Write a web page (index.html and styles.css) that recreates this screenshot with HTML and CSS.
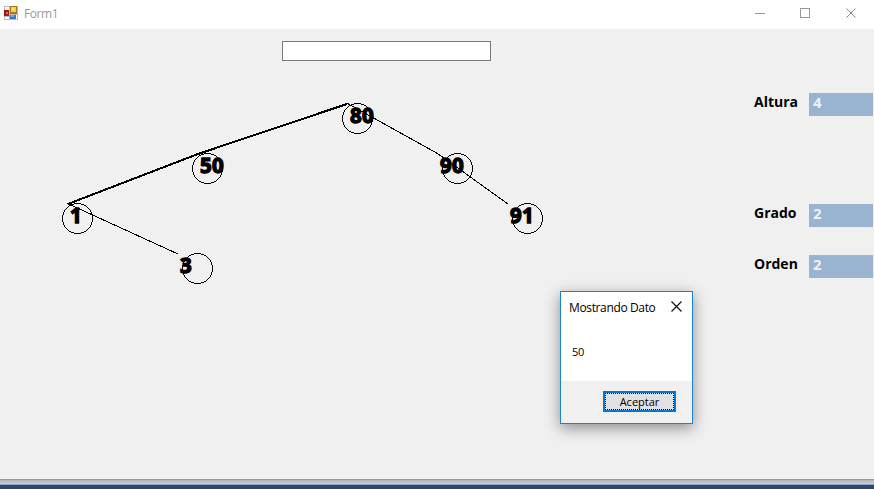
FILE: index.html
```html
<!DOCTYPE html>
<html lang="es">
<head>
<meta charset="utf-8">
<title>Form1</title>
<link rel="stylesheet" href="styles.css">
</head>
<body>
<div class="window">
  <header class="titlebar">
    <svg class="app-icon" width="14" height="14" shape-rendering="crispEdges">
      <rect width="14" height="14" fill="#b9b9b9"/>
      <path fill="#fff" d="M1 1h4v3H1zM1 11h4v2H1zM12 9h1v4h-1z"/>
      <rect y="4" width="5" height="6" fill="#a31a12"/><rect x="2" y="6" width="2" height="2" fill="#e8695c"/>
      <rect x="6" width="7" height="8" fill="#a77b12"/><rect x="7" y="1" width="5" height="5" fill="#f8ce47"/><rect x="8" y="2" width="2" height="2" fill="#ffe391"/>
      <rect x="6" y="9" width="6" height="4" fill="#3a72cc"/><rect x="7" y="9" width="3" height="2" fill="#78a7ec"/>
    </svg>
    <span class="caption">Form1</span>
    <svg class="controls" width="102" height="11" fill="none" stroke="#999">
      <path shape-rendering="crispEdges" d="M0 5.500h10M45.500 .5h9v9h-9z"/>
      <path d="M91.500 .5l9 9M100.500 .5l-9 9" stroke="#888"/>
    </svg>
  </header>
  <main class="client">
    <section class="workspace">
      <input class="entry" type="text" aria-label="Dato">
      <svg class="tree" width="740" height="418" viewBox="0 61 740 418">
        <g class="edges" shape-rendering="crispEdges">
          <path class="heavy" d="M68 204L198 154L347 104"/>
          <path d="M347.500 103.500L437.500 153.500L508 204M67.500 203.500L178 254"/>
        </g>
        <g class="nodes" shape-rendering="crispEdges">
          <circle cx="357.500" cy="118.500" r="15"/><circle cx="207.500" cy="168.500" r="15"/>
          <circle cx="77.500" cy="218.500" r="15"/><circle cx="197.500" cy="268.500" r="15"/>
          <circle cx="457.500" cy="168.500" r="15"/><circle cx="527.500" cy="218.500" r="15"/>
        </g>
        <g class="keys">
          <text x="350" y="123">80</text><text x="200" y="173">50</text>
          <text x="70" y="223">1</text><text x="180" y="273">3</text>
          <text x="440" y="173">90</text><text x="510" y="223">91</text>
        </g>
      </svg>
    </section>
    <aside class="stats">
      <span class="label">Altura</span><span class="value">4</span>
      <span class="label">Grado</span><span class="value">2</span>
      <span class="label">Orden</span><span class="value">2</span>
    </aside>
  </main>
  <footer class="edge"></footer>
</div>
<div class="dialog" role="dialog">
  <div class="dialog-head"><span>Mostrando Dato</span>
    <svg width="11" height="11" stroke="#111" stroke-width="1.200"><path d="M.5 .5l10 10M10.500 .5l-10 10"/></svg>
  </div>
  <div class="message">50</div>
  <div class="actions"><button class="accept"><span>Aceptar</span></button></div>
</div>
</body>
</html>
```

FILE: styles.css
```css
* { box-sizing: border-box; }
body { margin: 0; width: 874px; height: 489px; overflow: hidden; font-family: "Open Sans", "Noto Sans", sans-serif; }
.window { display: flex; flex-direction: column; height: 489px; background: #f0f0f0; }
.titlebar { display: flex; align-items: center; height: 29px; padding: 0 17px 3px 4px; background: #fff; }
.app-icon { margin-right: 6px; }
.caption { color: #999; font-size: 12px; letter-spacing: -.4px; line-height: 16px; padding-top: 2px; }
.controls { margin-left: auto; }
.client { display: flex; height: 450px; }
.workspace { display: flex; flex-direction: column; width: 740px; padding-top: 12px; }
.entry { width: 209px; height: 20px; margin-left: 282px; border: 1px solid #7a7a7a; background: #fff; outline: 0; }
.tree { display: block; }
.edges path { fill: none; stroke: #000; stroke-width: 1; }
.edges .heavy { stroke-width: 2; }
.nodes circle { fill: none; stroke: #000; }
.keys { font-size: 20.5px; font-weight: 700; letter-spacing: .3px; fill: #000; stroke: #000; stroke-width: 1.3px; }
.stats { display: grid; grid-template-columns: 55px 64px; grid-template-rows: 111px 51px 23px; align-content: start; padding: 64px 0 0 14px; width: 134px; font-size: 14px; font-weight: 700; line-height: 18px; }
.label { color: #000; }
.value { height: 23px; padding-left: 4px; background: #99b4d1; color: #f0f0f0; font-size: 15px; }
.edge { height: 10px; background: linear-gradient(#999 1px, #b4b4b8 1px, #ceced2 5px, #8ca3c5 5px, #8ca3c5 6px, #2f4768 6px); }
.dialog { position: absolute; left: 560px; top: 291px; display: flex; flex-direction: column; width: 133px; height: 133px; border: 1px solid #1e82d2; background: #fff; box-shadow: 0 4px 14px rgba(0,0,0,.42); color: #000; }
.dialog-head { display: flex; justify-content: space-between; align-items: center; height: 30px; padding: 0 10px 0 8px; font-size: 12px; letter-spacing: -.36px; white-space: nowrap; }
.dialog-head svg { margin-bottom: 2px; }
.message { height: 59px; padding: 22px 11px 0; font-size: 11px; letter-spacing: -.2px; line-height: 16px; }
.actions { flex: 1; display: flex; justify-content: flex-end; align-items: flex-start; padding: 10px 16px 0 0; background: #f0f0f0; }
.accept { width: 73px; height: 21px; padding: 0; border: 2px solid #0078d7; background: #e1e1e1; font: 11px "Open Sans", sans-serif; color: #000; }
.accept span { display: block; height: 17px; border: 1px dotted #000; line-height: 15px; }
```
